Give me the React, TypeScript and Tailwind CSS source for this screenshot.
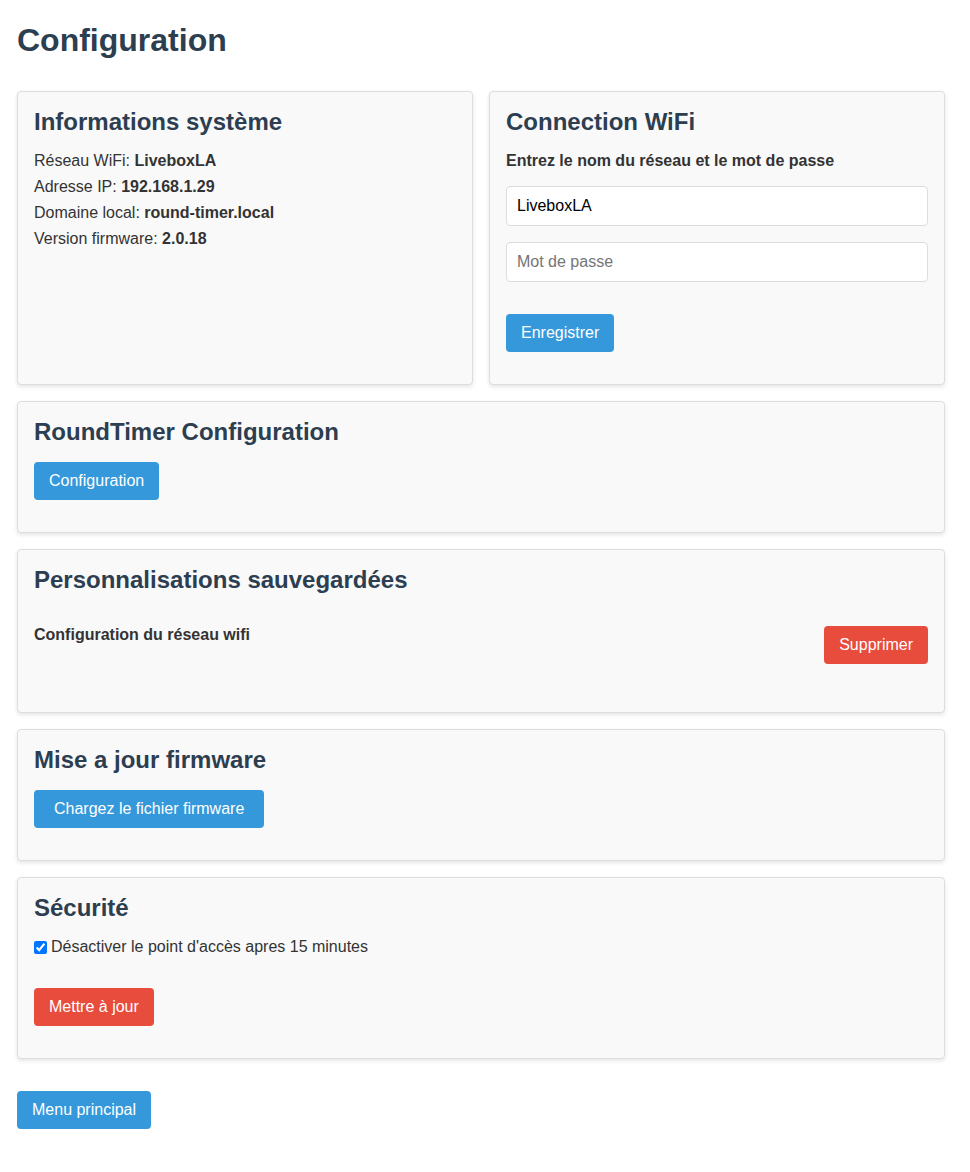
const font = { fontFamily: '"Liberation Sans", Arial, sans-serif' };

function Card({ title, children, className = '' }: { title: string; children: React.ReactNode; className?: string }) {
  return (
    <div className={`rounded border border-[#ddd] bg-[#f9f9f9] px-4 pt-4 shadow-[0_2px_4px_rgba(0,0,0,0.1)] ${className}`}>
      <h2 className="text-[24px] font-bold leading-[28px] text-[#2c3e50]">{title}</h2>
      {children}
    </div>
  );
}

function Btn({ children, red = false, className = '' }: { children: React.ReactNode; red?: boolean; className?: string }) {
  return (
    <button
      className={`h-[38px] rounded px-[15px] text-[16px] leading-[18px] text-white ${red ? 'bg-[#e74c3c]' : 'bg-[#3498db]'} ${className}`}
    >
      {children}
    </button>
  );
}

export default function App() {
  return (
    <div className="min-h-[1172px] bg-white px-[17px] text-[#2c3e50]" style={font}>
      <div className="w-[928px]">
        <h1 className="pt-[22px] text-[32px] font-bold leading-[37px] text-[#2c3e50]">Configuration</h1>

        <div className="mt-[32px] grid grid-cols-2 gap-4">
          <Card title="Informations système">
            <div className="mt-3 text-[16px] leading-[26px] text-[#333]">
              <div>
                Réseau WiFi: <b>LiveboxLA</b>
              </div>
              <div>
                Adresse IP: <b>192.168.1.29</b>
              </div>
              <div>
                Domaine local: <b>round-timer.local</b>
              </div>
              <div>
                Version firmware: <b>2.0.18</b>
              </div>
            </div>
          </Card>
          <Card title="Connection WiFi" className="pb-[32px]">
            <div className="mt-3 text-[16px] font-bold leading-[26px] text-[#333]">
              Entrez le nom du réseau et le mot de passe
            </div>
            <input
              defaultValue="LiveboxLA"
              className="mt-[12px] block h-[40px] w-full rounded border border-[#ddd] bg-white px-[10px] text-[16px] text-black outline-none"
            />
            <input
              type="password"
              placeholder="Mot de passe"
              className="mt-4 block h-[40px] w-full rounded border border-[#ddd] bg-white px-[10px] text-[16px] text-black outline-none placeholder:text-[#757575]"
            />
            <Btn className="mt-[32px]">Enregistrer</Btn>
          </Card>
        </div>

        <Card title="RoundTimer Configuration" className="mt-4 pb-[32px]">
          <Btn className="mt-4">Configuration</Btn>
        </Card>

        <Card title="Personnalisations sauvegardées" className="mt-4 pb-[48px]">
          <div className="mt-[32px] flex items-start justify-between">
            <div className="text-[16px] font-bold leading-[18px] text-[#333]">Configuration du réseau wifi</div>
            <Btn red>Supprimer</Btn>
          </div>
        </Card>

        <Card title="Mise a jour firmware" className="mt-4 pb-[32px]">
          <Btn className="mt-4 px-[20px]">Chargez le fichier firmware</Btn>
        </Card>

        <Card title="Sécurité" className="mt-4 pb-[32px]">
          <label className="mt-[12px] flex items-center gap-[4px] text-[16px] leading-[26px] text-[#333]">
            <input type="checkbox" defaultChecked className="h-[13px] w-[13px] accent-[#0075ff]" />
            Désactiver le point d'accès apres 15 minutes
          </label>
          <Btn red className="mt-[28px] px-[14px]">
            Mettre à jour
          </Btn>
        </Card>

        <Btn className="mt-[32px]">Menu principal</Btn>
      </div>
    </div>
  );
}
